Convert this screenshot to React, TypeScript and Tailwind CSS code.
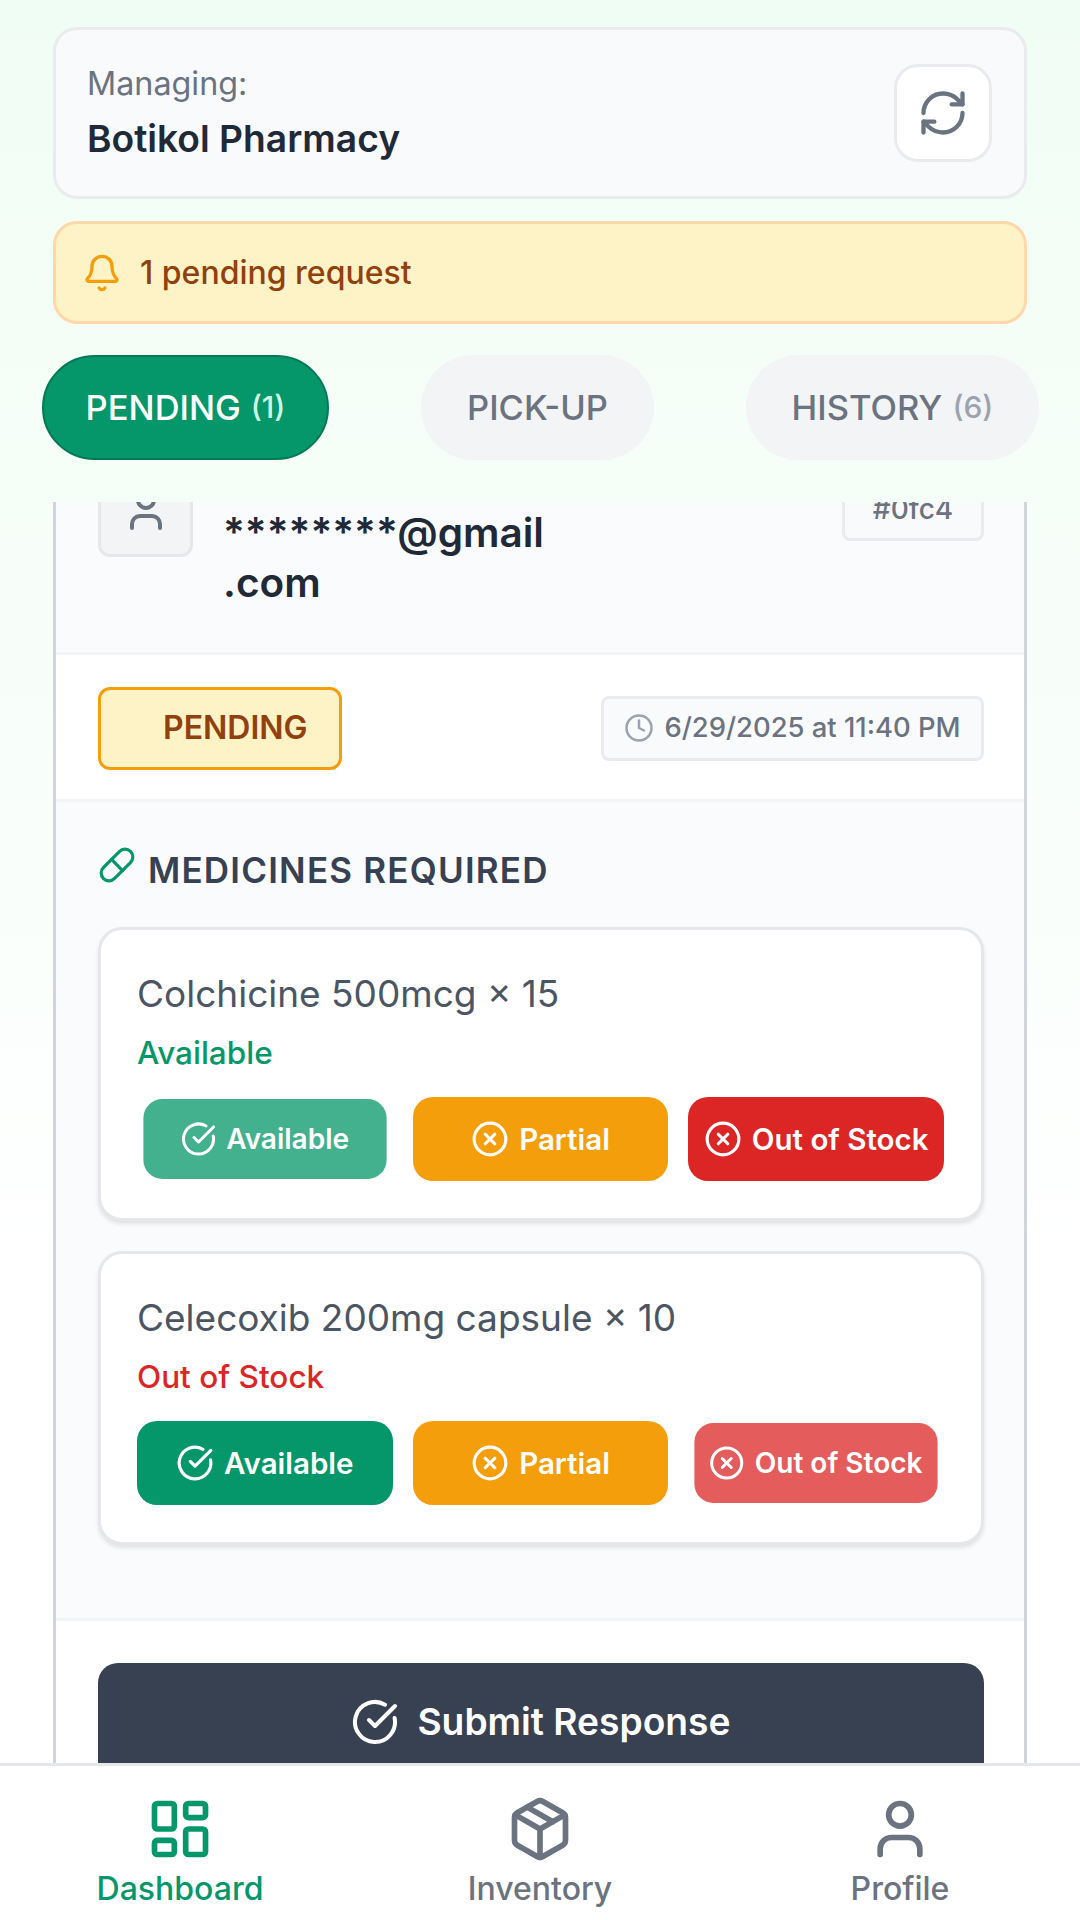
import { Bell, CircleCheckBig, CircleX, Clock, LayoutDashboard, Package, Pill, RefreshCw, User } from "lucide-react";

const inter = "font-['Inter',sans-serif]";

function ActionButton({
  label,
  color,
  faded,
  check,
}: {
  label: string;
  color: string;
  faded?: boolean;
  check?: boolean;
}) {
  const Icon = check ? CircleCheckBig : CircleX;
  return (
    <button
      className={`flex h-[84px] flex-1 items-center justify-center gap-[10px] rounded-[20px] text-[29.5px] font-semibold text-white ${color} ${
        faded ? "scale-95 opacity-75" : ""
      }`}
    >
      <Icon className="h-[38px] w-[38px]" strokeWidth={2} />
      {label}
    </button>
  );
}

function MedicineCard({
  name,
  status,
  statusColor,
  faded,
}: {
  name: string;
  status: string;
  statusColor: string;
  faded: "available" | "out";
}) {
  return (
    <div className="h-[294px] rounded-[24px] border-[3px] border-[#e5e7eb] bg-white pt-[37px] pr-[37px] pl-[36px] shadow-[0_3px_4px_rgba(0,0,0,0.1)]">
      <div className="text-[37px] leading-[54px] text-[#4b5563]">{name}</div>
      <div className={`mt-[9px] text-[31.5px] leading-[45px] font-medium ${statusColor}`}>{status}</div>
      <div className="mt-[22px] flex gap-[20px]">
        <ActionButton label="Available" color="bg-[#059669]" faded={faded === "available"} check />
        <ActionButton label="Partial" color="bg-[#f59e0b]" />
        <ActionButton label="Out of Stock" color="bg-[#dc2626]" faded={faded === "out"} />
      </div>
    </div>
  );
}

function NavItem({ label, icon, active }: { label: string; icon: React.ReactNode; active?: boolean }) {
  return (
    <div className={`flex w-[360px] flex-col items-center gap-[4px] ${active ? "text-[#059669]" : "text-[#6b7280]"}`}>
      {icon}
      <span className="text-[32px] leading-[44px] font-medium">{label}</span>
    </div>
  );
}

export default function App() {
  return (
    <div className={`flex h-[1920px] w-[1080px] flex-col overflow-hidden bg-gradient-to-b from-[#f0fdf4] from-0% to-white to-70% ${inter}`}>
      <div className="h-[502px] shrink-0 pt-[27px]">
        <div className="mx-[53px] flex h-[172px] items-center justify-between rounded-[24px] border-[3px] border-[#e9ebee] bg-[#f9fafb] pr-[32px] pl-[31px]">
          <div>
            <div className="text-[32.3px] leading-[45px] text-[#6b7280]">Managing:</div>
            <div className="mt-[6px] text-[37.2px] leading-[54px] font-semibold text-[#1f2937]">Botikol Pharmacy</div>
          </div>
          <button className="flex h-[98px] w-[98px] items-center justify-center rounded-[24px] border-[3px] border-[#e9ebee] bg-white">
            <RefreshCw className="h-[52px] w-[52px] text-[#6b7280]" strokeWidth={2} />
          </button>
        </div>
        <div className="mx-[53px] mt-[22px] flex h-[103px] items-center gap-[18px] rounded-[24px] border-[3px] border-[#fed7aa] bg-[#fef3c7] pl-[26px]">
          <Bell className="h-[40px] w-[40px] text-[#f59e0b]" strokeWidth={2} />
          <span className="text-[32px] font-medium text-[#92400e]">1 pending request</span>
        </div>
        <div className="mt-[31px] flex justify-between pr-[41px] pl-[42px] text-[34.5px] font-medium">
          <div className="flex h-[105px] w-[287px] items-center justify-center gap-[10px] rounded-full border-[2px] border-[#047857] bg-[#059669] text-white">
            PENDING <span className="text-[30px] text-[#d1fae5]">(1)</span>
          </div>
          <div className="flex h-[105px] w-[233px] items-center justify-center rounded-full bg-[#f3f4f6] text-[#6b7280]">PICK-UP</div>
          <div className="flex h-[105px] w-[293px] items-center justify-center gap-[10px] rounded-full bg-[#f3f4f6] text-[#6b7280]">
            HISTORY <span className="text-[30px] text-[#9ca3af]">(6)</span>
          </div>
        </div>
      </div>

      <div className="min-h-0 flex-1 overflow-hidden">
        {/* list is scrolled: the top of the card sits above the clip */}
        <div className="mx-[53px] mt-[-60px] border-x-[3px] border-[#d1d5db] bg-white">
          <div className="flex h-[213px] justify-between border-b-[3px] border-[#f3f4f6] bg-[#fafbfc] pr-[40px] pl-[42px]">
            <div className="flex items-start gap-[30px] pt-[20px]">
              <div className="flex h-[95px] w-[95px] items-center justify-center rounded-[12px] border-[3px] border-[#e5e7eb] bg-[#f3f4f6]">
                <User className="h-[48px] w-[48px] text-[#6b7280]" />
              </div>
              <div className="w-[324px] pt-[46px] text-[40.5px] leading-[50px] font-semibold break-words text-[#1f2937]">
                ********@gmail .com
              </div>
            </div>
            <div className="mt-[35px] flex h-[64px] w-[142px] items-center justify-center rounded-[8px] border-[3px] border-[#e9ebee] bg-[#f9fafb] text-[28px] font-medium text-[#6b7280]">
              #0fc4
            </div>
          </div>
          <div className="flex h-[147px] items-center justify-between border-b-[3px] border-[#f3f4f6] bg-white pt-[2px] pr-[40px] pl-[42px]">
            <div className="flex h-[83px] w-[244px] items-center rounded-[12px] border-[3px] border-[#f59e0b] bg-[#fef3c7] pl-[62px] text-[32px] font-semibold text-[#92400e]">
              PENDING
            </div>
            <div className="flex h-[65px] w-[383px] items-center justify-center gap-[10px] rounded-[8px] border-[3px] border-[#e9ebee] bg-[#f9fafb] text-[27.4px] font-medium text-[#6b7280]">
              <Clock className="h-[30px] w-[30px] text-[#9ca3af]" />
              6/29/2025 at 11:40 PM
            </div>
          </div>
          <div className="h-[819px] border-b-[3px] border-[#f3f4f6] bg-[#fafbfc] pt-[46px] pr-[40px] pl-[42px]">
            <div className="flex items-center gap-[12px]">
              <Pill className="h-[38px] w-[38px] -translate-y-[5px] text-[#059669]" />
              <span className="text-[35px] leading-[44px] font-semibold tracking-[1.2px] text-[#374151]">MEDICINES REQUIRED</span>
            </div>
            <div className="mt-[35px] flex flex-col gap-[30px]">
              <MedicineCard name="Colchicine 500mcg × 15" status="Available" statusColor="text-[#059669]" faded="available" />
              <MedicineCard name="Celecoxib 200mg capsule × 10" status="Out of Stock" statusColor="text-[#dc2626]" faded="out" />
            </div>
          </div>
          <div className="bg-white pt-[42px] pr-[40px] pl-[42px]">
            <button className="flex h-[118px] w-full items-center justify-center gap-[18px] rounded-[20px] bg-[#374151] text-[37.2px] font-semibold text-white">
              <CircleCheckBig className="h-[48px] w-[48px]" />
              Submit Response
            </button>
          </div>
        </div>
      </div>

      <div className="relative flex h-[157px] shrink-0 justify-between border-t-[3px] border-[#e5e7eb] bg-white pt-[29px]">
        <NavItem label="Dashboard" active icon={<LayoutDashboard className="h-[68px] w-[68px]" />} />
        <NavItem label="Inventory" icon={<Package className="h-[68px] w-[68px]" />} />
        <NavItem label="Profile" icon={<User className="h-[68px] w-[68px]" />} />
      </div>
    </div>
  );
}
